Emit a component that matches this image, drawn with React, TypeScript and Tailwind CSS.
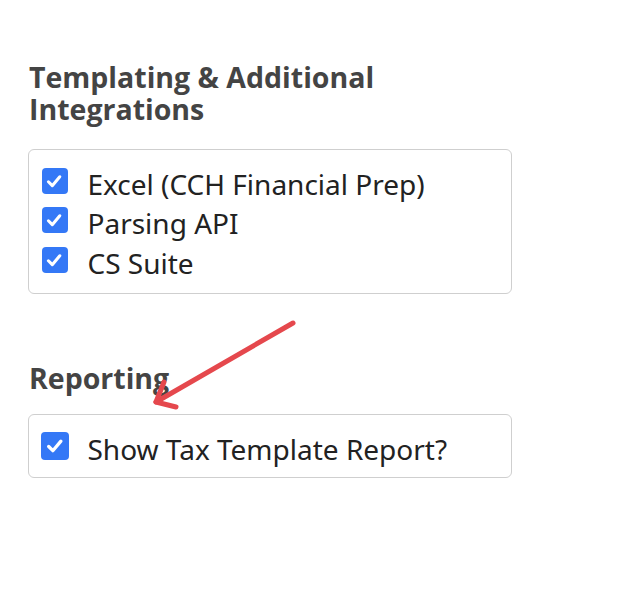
import React from "react";

function Check({ size }: { size: number }) {
  return (
    <div
      className={
        size === 28
          ? "w-[28px] h-[28px] rounded-[4px] bg-[#3478f6] flex items-center justify-center shrink-0"
          : "w-[26px] h-[26px] rounded-[4px] bg-[#3478f6] flex items-center justify-center shrink-0"
      }
    >
      <svg width={size * 0.7} height={size * 0.7} viewBox="0 0 16 16" fill="none">
        <path d="M3 8.6 L6.4 12 L13 4.2" stroke="white" strokeWidth="2.7" strokeLinecap="round" strokeLinejoin="round" />
      </svg>
    </div>
  );
}

function Row({ label, big }: { label: string; big?: boolean }) {
  return (
    <div className="flex items-center h-[39.5px]">
      <Check size={big ? 28 : 26} />
      <span
        className={
          big
            ? "ml-[19px] text-[28px] text-[#222] leading-[28px] translate-y-[3px]"
            : "ml-[20px] text-[28px] text-[#222] leading-[28px] translate-y-[3px]"
        }
        style={{ fontFamily: '"Noto Sans", sans-serif' }}
      >
        {label}
      </span>
    </div>
  );
}

export default function App() {
  const heading = { fontFamily: '"Open Sans", sans-serif' };
  return (
    <div className="relative w-[618px] h-[596px] bg-white pl-[28px] pt-[62px]">
      <h2 className="pl-[1px] text-[28.5px] leading-[31.5px] font-bold text-[#444]" style={heading}>
        Templating &amp; Additional
        <br />
        Integrations
      </h2>
      <div className="mt-[24px] w-[484px] h-[145px] border-[1.5px] border-[#cfcfcf] rounded-[6px] pl-[12.5px] pt-[11px] flex flex-col">
        <Row label="Excel (CCH Financial Prep)" />
        <Row label="Parsing API" />
        <Row label="CS Suite" />
      </div>
      <h2 className="mt-[68.5px] pl-[1px] text-[28.5px] leading-[31.5px] font-bold text-[#444]" style={heading}>
        Reporting
      </h2>
      <div className="mt-[20px] w-[484px] h-[64px] border-[1.5px] border-[#cfcfcf] rounded-[6px] pl-[11.5px] flex items-center">
        <Row label="Show Tax Template Report?" big />
      </div>
      <svg className="absolute left-0 top-0 pointer-events-none" width="618" height="596">
        <g stroke="#e5484d" strokeWidth="5" strokeLinecap="round" strokeLinejoin="round" fill="none">
          <path d="M293 323 L156 402" />
          <path d="M164 382 L156 402 L176 407" />
        </g>
      </svg>
    </div>
  );
}
